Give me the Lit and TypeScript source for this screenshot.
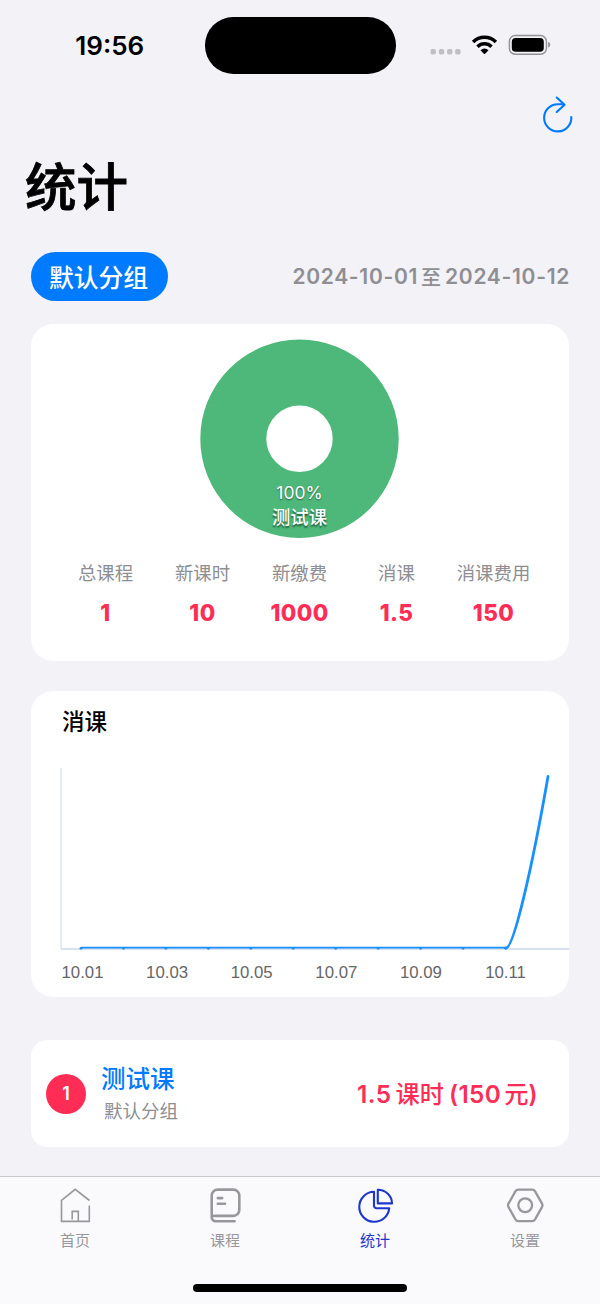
import { LitElement, html, css, svg } from "lit";
import { customElement } from "lit/decorators.js";

const STATS = [
  { label: "总课程", value: "1" },
  { label: "新课时", value: "10" },
  { label: "新缴费", value: "1000" },
  { label: "消课", value: "1.5" },
  { label: "消课费用", value: "150" },
];

const TABS = [
  {
    label: "首页",
    active: false,
    icon: svg`<g stroke-width="1.6"><path d="M34.5 14.5 20.2 3.3 6.5 14.5V35.4H34.3V19.6"/><path d="M17.2 33.6V25.4H23.3V35"/></g>`,
  },
  {
    label: "课程",
    active: false,
    icon: svg`<g stroke-width="2.6" stroke-linecap="round"><path d="M6.7 29V9.6a6 6 0 0 1 6-6H28.3a6 6 0 0 1 6 6V23.9a6 6 0 0 1-6 6H11a4.3 2.6 0 0 0-4.3 0.6c0 2.8 1.7 4.8 4.5 4.8H29.6"/><path d="M12.8 12.1H17.2M12.8 17.7H20"/></g>`,
  },
  {
    label: "统计",
    active: true,
    icon: svg`<g stroke-width="2.1" stroke-linejoin="round"><path d="M19 5.8A15 15 0 1 0 34.2 22.3H21.5a2.5 2.5 0 0 1-2.5-2.5Z"/><path d="M22.8 3.7V17.4H37A14.2 13.7 0 0 0 22.8 3.7Z"/></g>`,
  },
  {
    label: "设置",
    active: false,
    icon: svg`<g stroke-width="2.3" stroke-linejoin="round"><path d="M13.5 3.7H27Q29 3.7 30.1 5.4L36.9 17.4Q38 19.3 36.9 21.2L30.1 33.4Q29 35.2 27 35.2H13.5Q11.5 35.2 10.4 33.4L3.6 21.2Q2.5 19.3 3.6 17.4L10.4 5.4Q11.5 3.7 13.5 3.7Z"/><circle cx="20.2" cy="19.3" r="6.9"/></g>`,
  },
];

@customElement("status-bar")
class StatusBar extends LitElement {
  static styles = css`
    :host { display: grid; grid-template-columns: 204.5px 191px 1fr; height: 92px; box-sizing: border-box; padding-top: 17px; align-items: start; }
    .time { font: 600 26px/57px Inter, sans-serif; text-align: center; padding-left: 15px; }
    .island { height: 56.5px; border-radius: 28.25px; background: #000; }
    .icons { display: block; margin-left: 34px; margin-top: 13px; }
  `;
  render() {
    return html`
      <div class="time">19:56</div>
      <div class="island"></div>
      <svg class="icons" width="122" height="30" viewBox="429.5 30 122 30">
        <g fill="#bfbfc4">
          ${[430, 438.3, 446.5, 454.7].map((x) => svg`<rect x=${x} y="49" width="5.4" height="5.4" rx="1.7"/>`)}
        </g>
        <g fill="none" stroke="#000" stroke-width="3.5">
          <path d="M472.6 42A16.3 16.3 0 0 1 495.4 42"/>
          <path d="M477 46.7A10 10 0 0 1 491 46.7"/>
        </g>
        <path d="M480 50.2Q484 46.8 488 50.2L484.7 53.7Q484 54.3 483.3 53.7Z"/>
        <rect x="508.9" y="35.5" width="37" height="18.7" rx="5.8" fill="none" stroke="#929295" stroke-width="1.4"/>
        <rect x="511.3" y="38" width="32" height="13.8" rx="3.8"/>
        <path d="M547.6 41.8Q549.8 42.6 549.8 44.8T547.6 47.8Z" fill="#929295"/>
      </svg>
    `;
  }
}

@customElement("summary-card")
class SummaryCard extends LitElement {
  static styles = css`
    :host { display: flex; flex-direction: column; box-sizing: border-box; height: 337px; padding: 15px 27px 0 26px; background: #fff; border-radius: 22px; }
    .pie { width: 199px; height: 200px; align-self: center; display: block; }
    .pct { font: 400 17.5px Inter, sans-serif; fill: #fff; }
    .name { font: 500 18.3px "Noto Sans CJK SC", sans-serif; fill: #fff; }
    .labels { text-shadow: 0 1.5px 1.5px rgba(0, 0, 0, 0.5); }
    .stats { display: grid; grid-template-columns: repeat(5, 1fr); text-align: center; margin-top: 18px; }
    .label { font: 400 18.4px/30px "Noto Sans CJK SC", sans-serif; color: #8e8e93; white-space: nowrap; }
    .value { font: 800 22.5px/30px Inter, sans-serif; color: #ff2d55; margin-top: 11px; letter-spacing: 0.4px; }
  `;
  render() {
    return html`
      <svg class="pie" viewBox="0 0 199 200">
        <circle cx="99.5" cy="99.8" r="66.2" fill="none" stroke="#4db87a" stroke-width="66"/>
        <g class="labels" text-anchor="middle">
          <text class="pct" x="99.5" y="159.5">100%</text>
          <text class="name" x="99.5" y="185">测试课</text>
        </g>
      </svg>
      <div class="stats">
        ${STATS.map((s) => html`<div><div class="label">${s.label}</div><div class="value">${s.value}</div></div>`)}
      </div>
    `;
  }
}

@customElement("trend-card")
class TrendCard extends LitElement {
  static styles = css`
    :host { display: block; box-sizing: border-box; height: 306px; padding-top: 13px; background: #fff; border-radius: 22px; }
    .title { font: 500 22.5px/32px "Noto Sans CJK SC", sans-serif; margin-left: 31px; height: 32px; }
    .chart { display: block; margin-top: 24px; }
    .tick { font: 400 16.8px "Liberation Sans", sans-serif; fill: #666; }
  `;
  render() {
    const days = Array.from({ length: 11 }, (_, i) => 50 + i * 42.45);
    return html`
      <div class="title">消课</div>
      <svg class="chart" width="538" height="230" viewBox="0 760 538 230">
        <path d="M30 768V948.5" stroke="#e0e6f1" stroke-width="1.6"/>
        <path d="M30 949H538" stroke="#ccd6eb" stroke-width="1.6"/>
        <g fill="#1890ff">${days.map((x) => svg`<circle cx=${x} cy="948.3" r="1.4"/>`)}</g>
        <path d="M50 947.6H474.5" stroke="#1890ff" stroke-width="1.7"/>
        <path d="M475 948C483 948 502 863 517 776.5" fill="none" stroke="#1890ff" stroke-width="2.8" stroke-linecap="round"/>
        <g text-anchor="middle">
          ${["10.01", "10.03", "10.05", "10.07", "10.09", "10.11"].map(
            (t, i) => svg`<text class="tick" x=${51.5 + i * 84.6} y="977.5">${t}</text>`
          )}
        </g>
      </svg>
    `;
  }
}

@customElement("course-row")
class CourseRow extends LitElement {
  static styles = css`
    :host { display: flex; align-items: center; box-sizing: border-box; height: 107px; padding: 0 31px 0 15px; background: #fff; border-radius: 16px; font-family: "Noto Sans CJK SC", sans-serif; }
    .rank { width: 40px; height: 40px; border-radius: 50%; background: #ff2d55; color: #fff; font: 600 18px/40px Inter, sans-serif; text-align: center; }
    .info { margin-left: 15px; flex: 1; padding-bottom: 3px; }
    .name { font-size: 24.5px; line-height: 34px; font-weight: 500; color: #007aff; }
    .group { font-size: 18.5px; line-height: 26px; color: #8e8e93; margin: 2px 0 0 3px; }
    .total { font: 600 24.3px/34px Inter, sans-serif; color: #ff2d55; white-space: nowrap; display: flex; align-items: baseline; letter-spacing: 0.4px; margin-bottom: 1px; }
    .cjk { font: 500 24.3px/34px "Noto Sans CJK SC", sans-serif; letter-spacing: 0; }
    .hours { margin: 0 5px 0 4px; }
    .yuan { margin-left: 3px; }
  `;
  render() {
    return html`
      <div class="rank">1</div>
      <div class="info"><div class="name">测试课</div><div class="group">默认分组</div></div>
      <div class="total"><span>1.5</span><span class="cjk hours">课时</span><span>(150</span><span class="cjk yuan">元</span><span>)</span></div>
    `;
  }
}

@customElement("tab-bar")
class TabBar extends LitElement {
  static styles = css`
    :host { display: flex; flex-direction: column; height: 128px; box-sizing: border-box; border-top: 1px solid #c8c8cb; background: #fafafc; }
    .tabs { display: grid; grid-template-columns: repeat(4, 150px); height: 107px; }
    .tab { display: flex; flex-direction: column; align-items: center; color: #98989c; padding-top: 9px; font: 400 15px/24px "Noto Sans CJK SC", sans-serif; }
    .active { color: #1c36cf; }
    .icon { width: 40px; height: 40px; display: block; margin-bottom: 2px; fill: none; stroke: currentColor; }
    .indicator { width: 213.5px; height: 8px; border-radius: 4px; background: #000; align-self: center; }
  `;
  render() {
    return html`
      <div class="tabs">
        ${TABS.map(
          (t) => html`<div class="tab ${t.active ? "active" : ""}"><svg class="icon" viewBox="0 0 40 40">${t.icon}</svg>${t.label}</div>`
        )}
      </div>
      <div class="indicator"></div>
    `;
  }
}

@customElement("app-root")
class AppRoot extends LitElement {
  static styles = css`
    :host { display: flex; flex-direction: column; width: 600px; height: 1304px; overflow: hidden; background: #f2f2f7; color: #000; }
    .nav { display: flex; justify-content: flex-end; padding-right: 24px; height: 46px; }
    .heading { margin: 0; height: 114px; padding-left: 25px; font: 500 51.5px/92px "Noto Sans CJK SC", sans-serif; -webkit-text-stroke: 0.8px #000; }
    .filter { display: flex; justify-content: space-between; align-items: center; height: 49px; padding: 0 31px; margin-bottom: 23px; }
    .pill { width: 137px; height: 49px; border-radius: 24.5px; background: #007aff; color: #fff; font: 500 24.8px/49px "Noto Sans CJK SC", sans-serif; text-align: center; text-indent: -2px; }
    .range { font: 600 21px/30px Inter, sans-serif; color: #8e8e93; letter-spacing: 0.7px; display: flex; gap: 3px; margin-right: -1px; }
    .to { font: 500 20px/30px "Noto Sans CJK SC", sans-serif; letter-spacing: 0; padding-right: 1px; }
    .cards { flex: 1; display: flex; flex-direction: column; padding: 0 31px; }
    .gap-md { margin-top: 30px; }
    .gap-lg { margin-top: 43px; }
  `;
  render() {
    return html`
      <status-bar></status-bar>
      <div class="nav">
        <svg width="36" height="46" viewBox="540 92 36 46" fill="none" stroke="#007aff" stroke-width="2.1" stroke-linecap="round" stroke-linejoin="round">
          <path d="M571.3 117A13.6 13.6 0 1 1 557.7 104.2H564M556.7 97.5 564.6 104.7 556.7 112"/>
        </svg>
      </div>
      <h1 class="heading">统计</h1>
      <div class="filter">
        <div class="pill">默认分组</div>
        <div class="range"><span>2024-10-01</span><span class="to">至</span><span>2024-10-12</span></div>
      </div>
      <div class="cards">
        <summary-card></summary-card>
        <trend-card class="gap-md"></trend-card>
        <course-row class="gap-lg"></course-row>
      </div>
      <tab-bar></tab-bar>
    `;
  }
}
